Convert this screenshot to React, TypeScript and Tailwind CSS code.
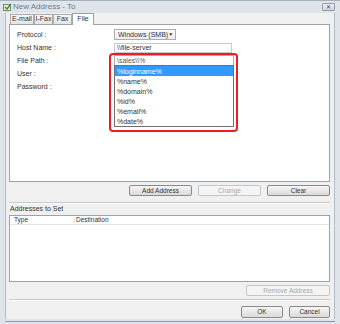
import { useState } from 'react'

const font = { fontFamily: '"Liberation Sans", Arial, sans-serif' }

const options = ['%loginname%', '%name%', '%domain%', '%id%', '%email%', '%date%']

const Btn = ({ label, disabled, className }: { label: string; disabled?: boolean; className: string }) => (
  <div
    className={`flex items-center justify-center rounded-[2px] border text-[6.5px] whitespace-nowrap ${
      disabled
        ? 'border-[#c3c7ca] bg-[#f4f4f4] text-[#a8a8a8]'
        : 'border-[#8a8a8a] bg-gradient-to-b from-[#f6f6f6] to-[#dadada] text-[#333]'
    } ${className}`}
  >
    {label}
  </div>
)

const Tab = ({ label, active, w }: { label: string; active?: boolean; w: string }) => (
  <div
    className={`${w} flex items-center justify-center border border-b-0 text-[7px] ${
      active
        ? 'h-[12px] bg-white border-[#9ea3aa] relative z-10 -mb-px'
        : 'h-[10px] mt-[2px] bg-gradient-to-b from-[#f6f6f6] to-[#e4e4e4] border-[#a8acb3]'
    }`}
  >
    {label}
  </div>
)

export default function App() {
  const [sel] = useState(0)
  return (
    <div className="w-[340px] h-[324px] bg-[#dfe4ea] flex flex-col overflow-hidden text-[#333]" style={font}>
      {/* title bar */}
      <div className="h-[13px] flex items-center pl-[3px] pr-[5px] border-t border-[#a7b1bc]">
        <svg width="9" height="8" viewBox="0 0 9 8">
          <rect x="0.5" y="1.5" width="7" height="6" fill="#e8ecd8" stroke="#7a8a60" />
          <path d="M2 4 L4 6 L8 1" stroke="#3a8a3a" strokeWidth="1.4" fill="none" />
        </svg>
        <span className="ml-[1px] text-[8px] text-[#6b7a8a]">New Address - To</span>
        <div className="flex-1" />
        <div className="w-[13px] h-[8px] border border-[#8f9aa6] rounded-[1px] bg-gradient-to-b from-[#eef1f4] to-[#cfd6de] flex items-center justify-center text-[6px] leading-none text-[#445]">
          ✕
        </div>
      </div>

      <div className="mx-[5px] mb-[2px] flex-1 bg-[#f0f0f0] border-x border-[#b4bcc5] pl-[3px] pr-[4px] flex flex-col">
        {/* tabs */}
        <div className="h-[11px] flex items-end pl-[1px]">
          <Tab label="E-mail" w="w-[24px]" />
          <Tab label="I-Fax" w="w-[19px]" />
          <Tab label="Fax" w="w-[19px]" />
          <Tab label="File" w="w-[22px]" active />
        </div>

        {/* panel */}
        <div className="h-[158px] bg-white border border-[#9ea3aa] relative pt-[4px] pl-[7px]">
          <div className="flex flex-col gap-[2px] text-[7px] leading-none">
            <div className="h-[11px] flex items-center">
              <span className="w-[97px]">Protocol :</span>
              <div className="w-[62px] h-[11px] border border-[#a9acb1] bg-gradient-to-b from-[#fbfbfb] to-[#ececec] flex items-center pl-[3px] pr-[3px] whitespace-nowrap">
                <span className="flex-1">Windows (SMB)</span>
                <span className="text-[5px]">▼</span>
              </div>
            </div>
            <div className="h-[11px] flex items-center">
              <span className="w-[97px]">Host Name :</span>
              <div className="w-[118px] h-[10px] border border-[#c6c9cd] flex items-center pl-[2px]">\\file-server</div>
            </div>
            <div className="h-[11px] flex items-center">
              <span className="w-[97px]">File Path :</span>
              <div className="w-[120px] h-[11px] border border-[#a9acb1] flex items-center pl-[2px] text-[#555]">\sales\\%</div>
            </div>
            <div className="h-[11px] flex items-center">
              <span className="w-[97px]">User :</span>
            </div>
            <div className="h-[11px] flex items-center">
              <span className="w-[97px]">Password :</span>
            </div>
          </div>

          {/* dropdown list */}
          <div className="absolute left-[104px] top-[40px] w-[120px] h-[62px] border border-[#6f6f6f] bg-white flex flex-col text-[7px] leading-none">
            {options.map((o, i) => (
              <div
                key={o}
                className={`h-[10px] flex items-center pl-[2px] ${i === sel ? 'bg-[#3399ff] text-white' : ''}`}
              >
                {o}
              </div>
            ))}
          </div>

          {/* highlight */}
          <div className="absolute left-[99px] top-[28px] w-[129px] h-[79px] border-2 border-[#ee1c24] rounded-[4px]" />
        </div>

        {/* buttons */}
        <div className="mt-[3px] flex justify-end gap-[6px]">
          <Btn label="Add Address" className="w-[63px] h-[11px]" />
          <Btn label="Change" disabled className="w-[63px] h-[11px]" />
          <Btn label="Clear" className="w-[63px] h-[11px]" />
        </div>

        <div className="mt-[6px] border-t border-[#c9c9c9] border-b-white border-b" />

        <div className="mt-[1px] text-[7px] h-[8px] leading-[8px] pl-[1px]">Addresses to Set</div>

        <div className="mt-[2px] h-[67px] bg-white border border-[#9ea3aa] flex flex-col">
          <div className="h-[9px] flex items-center text-[6.5px] leading-none border-b border-[#e5e5e5]">
            <span className="w-[65px] pl-[4px] border-r border-[#e5e5e5]">Type</span>
            <span className="pl-[1px]">Destination</span>
          </div>
        </div>

        <div className="mt-[3px] flex justify-end">
          <Btn label="Remove Address" disabled className="w-[84px] h-[11px]" />
        </div>

        <div className="mt-[3px] border-t border-[#c9c9c9] border-b-white border-b" />

        <div className="mt-[5px] flex justify-end gap-[6px]">
          <Btn label="OK" className="w-[42px] h-[12px]" />
          <Btn label="Cancel" className="w-[41px] h-[12px]" />
        </div>
      </div>
      <div className="h-[1px] mx-[5px] bg-[#8e99a5]" />
      <div className="h-[2px]" />
    </div>
  )
}
